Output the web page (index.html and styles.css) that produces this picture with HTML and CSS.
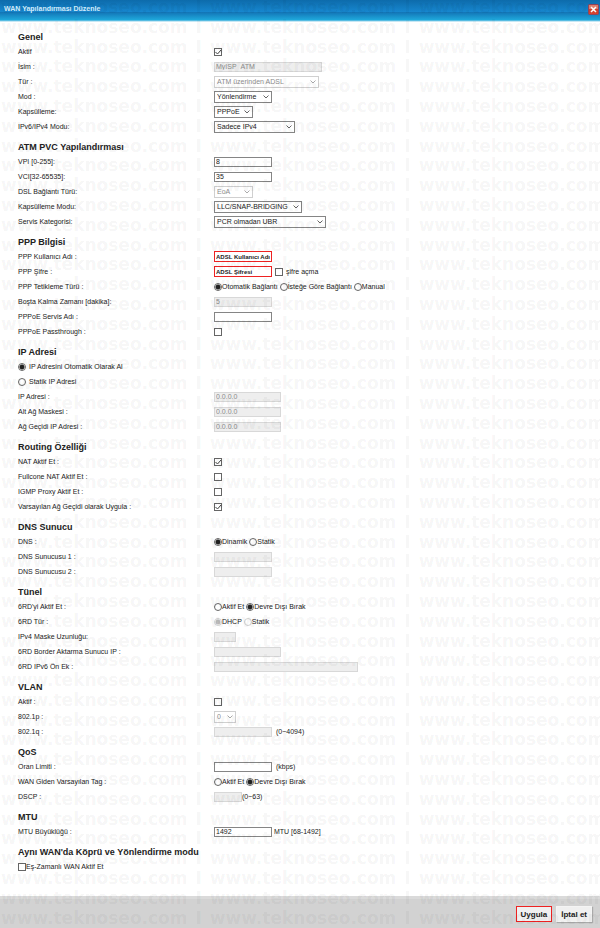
FILE: index.html
```html
<!DOCTYPE html>
<html lang="tr">
<head>
    <meta charset="UTF-8">
    <meta name="viewport" content="width=device-width, initial-scale=1.0">
    <title>WAN Yapılandırması Düzenle</title>
    <link rel="stylesheet" href="styles.css">
</head>

<body>
    <form class="container">
        <header>
            <h1>WAN Yapılandırması Düzenle</h1>
            <button type="button" class="close" aria-label="Kapat">
                <svg viewBox="0 0 11 11" width="11" height="11">
                    <rect x="0.5" y="0.5" width="10" height="10" rx="1" fill="#d8432f" stroke="#93455a"/>
                    <rect x="1" y="1" width="9" height="4" fill="#e4806f"/>
                    <path d="M3 3L8 8M8 3L3 8" stroke="#ffffff" stroke-width="1.5"/>
                </svg>
            </button>
        </header>

        <main>
            <section>
                <h2>Genel</h2>
                <div class="row">
                    <label for="active">Aktif</label>
                    <div class="field"><input type="checkbox" id="active" checked></div>
                </div>
                <div class="row">
                    <label for="name">İsim :</label>
                    <div class="field"><input type="text" id="name" class="w-name" value="MyISP_ATM" disabled></div>
                </div>
                <div class="row">
                    <label for="type">Tür :</label>
                    <div class="field"><select id="type" class="w-type" disabled><option>ATM üzerinden ADSL</option></select></div>
                </div>
                <div class="row">
                    <label for="mode">Mod :</label>
                    <div class="field"><select id="mode"><option>Yönlendirme</option></select></div>
                </div>
                <div class="row">
                    <label for="encap">Kapsülleme:</label>
                    <div class="field"><select id="encap" class="w-short"><option>PPPoE</option></select></div>
                </div>
                <div class="row">
                    <label for="ipmode">IPv6/IPv4 Modu:</label>
                    <div class="field"><select id="ipmode" class="w-ipmode"><option>Sadece IPv4</option></select></div>
                </div>
            </section>

            <section>
                <h2>ATM PVC Yapılandırması</h2>
                <div class="row">
                    <label for="vpi">VPI [0-255]:</label>
                    <div class="field"><input type="text" id="vpi" value="8"></div>
                </div>
                <div class="row">
                    <label for="vci">VCI[32-65535]:</label>
                    <div class="field"><input type="text" id="vci" value="35"></div>
                </div>
                <div class="row">
                    <label for="link">DSL Bağlantı Türü:</label>
                    <div class="field"><select id="link" class="w-short" disabled><option>EoA</option></select></div>
                </div>
                <div class="row">
                    <label for="encapmode">Kapsülleme Modu:</label>
                    <div class="field"><select id="encapmode" class="w-encap"><option>LLC/SNAP-BRIDGING</option></select></div>
                </div>
                <div class="row">
                    <label for="service">Servis Kategorisi:</label>
                    <div class="field"><select id="service" class="w-service"><option>PCR olmadan UBR</option></select></div>
                </div>
            </section>

            <section>
                <h2>PPP Bilgisi</h2>
                <div class="row">
                    <label for="user">PPP Kullanıcı Adı :</label>
                    <div class="field"><input type="text" id="user" class="marked" value="ADSL Kullanıcı Adı"></div>
                </div>
                <div class="row">
                    <label for="pass">PPP Şifre :</label>
                    <div class="field">
                        <input type="text" id="pass" class="marked" value="ADSL Şifresi">
                        <label class="choice spaced"><input type="checkbox">şifre açma</label>
                    </div>
                </div>
                <div class="row">
                    <span>PPP Tetikleme Türü :</span>
                    <div class="field">
                        <label class="choice"><input type="radio" name="trigger" checked>Otomatik Bağlantı</label>
                        <label class="choice"><input type="radio" name="trigger">İsteğe Göre Bağlantı</label>
                        <label class="choice"><input type="radio" name="trigger">Manual</label>
                    </div>
                </div>
                <div class="row">
                    <label for="idle">Boşta Kalma Zamanı [dakika]:</label>
                    <div class="field"><input type="text" id="idle" value="5" disabled></div>
                </div>
                <div class="row">
                    <label for="pppoe">PPPoE Servis Adı :</label>
                    <div class="field"><input type="text" id="pppoe"></div>
                </div>
                <div class="row">
                    <label for="passthrough">PPPoE Passthrough :</label>
                    <div class="field"><input type="checkbox" id="passthrough"></div>
                </div>
            </section>

            <section>
                <h2>IP Adresi</h2>
                <div class="row">
                    <label class="choice wide"><input type="radio" name="ip" checked>IP Adresini Otomatik Olarak Al</label>
                </div>
                <div class="row">
                    <label class="choice wide"><input type="radio" name="ip">Statik IP Adresi</label>
                </div>
                <div class="row">
                    <label for="ipaddr">IP Adresi :</label>
                    <div class="field"><input type="text" id="ipaddr" class="w-ip" value="0.0.0.0" disabled></div>
                </div>
                <div class="row">
                    <label for="mask">Alt Ağ Maskesi :</label>
                    <div class="field"><input type="text" id="mask" class="w-ip" value="0.0.0.0" disabled></div>
                </div>
                <div class="row">
                    <label for="gateway">Ağ Geçidi IP Adresi :</label>
                    <div class="field"><input type="text" id="gateway" class="w-ip" value="0.0.0.0" disabled></div>
                </div>
            </section>

            <section>
                <h2>Routing Özelliği</h2>
                <div class="row">
                    <label for="nat">NAT Aktif Et :</label>
                    <div class="field"><input type="checkbox" id="nat" checked></div>
                </div>
                <div class="row">
                    <label for="fullcone">Fullcone NAT Aktif Et :</label>
                    <div class="field"><input type="checkbox" id="fullcone"></div>
                </div>
                <div class="row">
                    <label for="igmp">IGMP Proxy Aktif Et :</label>
                    <div class="field"><input type="checkbox" id="igmp"></div>
                </div>
                <div class="row">
                    <label for="defgw">Varsayılan Ağ Geçidi olarak Uygula :</label>
                    <div class="field"><input type="checkbox" id="defgw" checked></div>
                </div>
            </section>

            <section>
                <h2>DNS Sunucu</h2>
                <div class="row">
                    <span>DNS :</span>
                    <div class="field">
                        <label class="choice"><input type="radio" name="dns" checked>Dinamik</label>
                        <label class="choice"><input type="radio" name="dns">Statik</label>
                    </div>
                </div>
                <div class="row">
                    <label for="dns1">DNS Sunucusu 1 :</label>
                    <div class="field"><input type="text" id="dns1" disabled></div>
                </div>
                <div class="row">
                    <label for="dns2">DNS Sunucusu 2 :</label>
                    <div class="field"><input type="text" id="dns2" disabled></div>
                </div>
            </section>

            <section>
                <h2>Tünel</h2>
                <div class="row">
                    <span>6RD'yi Aktif Et :</span>
                    <div class="field">
                        <label class="choice"><input type="radio" name="sixrd">Aktif Et</label>
                        <label class="choice"><input type="radio" name="sixrd" checked>Devre Dışı Bırak</label>
                    </div>
                </div>
                <div class="row">
                    <span>6RD Tür :</span>
                    <div class="field">
                        <label class="choice"><input type="radio" name="sixrdtype" checked disabled>DHCP</label>
                        <label class="choice"><input type="radio" name="sixrdtype" disabled>Statik</label>
                    </div>
                </div>
                <div class="row">
                    <label for="masklen">IPv4 Maske Uzunluğu:</label>
                    <div class="field"><input type="text" id="masklen" class="w-tiny" disabled></div>
                </div>
                <div class="row">
                    <label for="border">6RD Border Aktarma Sunucu IP :</label>
                    <div class="field"><input type="text" id="border" class="w-ip" disabled></div>
                </div>
                <div class="row">
                    <label for="prefix">6RD IPv6 Ön Ek :</label>
                    <div class="field"><input type="text" id="prefix" class="w-prefix" disabled></div>
                </div>
            </section>

            <section>
                <h2>VLAN</h2>
                <div class="row">
                    <label for="vlan">Aktif :</label>
                    <div class="field"><input type="checkbox" id="vlan"></div>
                </div>
                <div class="row">
                    <label for="p8021">802.1p :</label>
                    <div class="field"><select id="p8021" class="w-tiny" disabled><option>0</option></select></div>
                </div>
                <div class="row">
                    <label for="q8021">802.1q :</label>
                    <div class="field"><input type="text" id="q8021" disabled><span class="unit">(0~4094)</span></div>
                </div>
            </section>

            <section>
                <h2>QoS</h2>
                <div class="row">
                    <label for="rate">Oran Limiti :</label>
                    <div class="field"><input type="text" id="rate"><span class="unit">(kbps)</span></div>
                </div>
                <div class="row">
                    <span>WAN Giden Varsayılan Tag :</span>
                    <div class="field">
                        <label class="choice"><input type="radio" name="tag">Aktif Et</label>
                        <label class="choice"><input type="radio" name="tag" checked>Devre Dışı Bırak</label>
                    </div>
                </div>
                <div class="row">
                    <label for="dscp">DSCP :</label>
                    <div class="field"><input type="text" id="dscp" class="w-dscp" disabled><span>(0~63)</span></div>
                </div>
            </section>

            <section>
                <h2>MTU</h2>
                <div class="row">
                    <label for="mtu">MTU Büyüklüğü :</label>
                    <div class="field"><input type="text" id="mtu" value="1492"><span class="near">MTU [68-1492]</span></div>
                </div>
            </section>

            <section>
                <h2>Aynı WAN'da Köprü ve Yönlendirme modu</h2>
                <div class="row">
                    <label class="choice"><input type="checkbox">Eş-Zamanlı WAN Aktif Et</label>
                </div>
            </section>
        </main>

        <footer>
            <button type="submit" class="btn marked">Uygula</button>
            <button type="button" class="btn">İptal et</button>
        </footer>

        <div class="watermark" id="watermark" aria-hidden="true"></div>
    </form>

    <script>
        const watermark = document.getElementById('watermark');
        const line = '<span>www.teknoseo.com</span><span>I</span><span>www.teknoseo.com</span><span>I</span><span>www.teknoseo.com</span>';

        for (let i = 0; i < 47; i++) {
            const p = document.createElement('p');
            p.innerHTML = line;
            watermark.appendChild(p);
        }
    </script>
</body>
</html>
```

FILE: styles.css
```css
* {
    box-sizing: border-box;
}

body {
    margin: 0;
    background-color: #ffffff;
    color: #222222;
    font: 7px/15px "Liberation Sans", Arial, sans-serif;
}

.container {
    display: flex;
    flex-direction: column;
    position: relative;
    min-height: 100vh;
    overflow: hidden;
}

header {
    display: flex;
    justify-content: space-between;
    height: 22px;
    padding: 3px 1px 0 4px;
    background: linear-gradient(#0d6bab 0, #1787cf 12px, #1273b5 12px, #1fa9dc 20px, #8fcfe8 21px, #ffffff 22px);
}

h1 {
    margin: 0;
    color: #d5efff;
    font-size: 7px;
    line-height: 12px;
}

main {
    flex: 1;
    padding: 8px 18px;
}

section {
    margin-bottom: 6px;
}

h2 {
    margin: 0;
    font-size: 9px;
    line-height: 14px;
}

.row {
    display: grid;
    grid-template-columns: 196px 1fr;
    align-items: center;
    height: 15px;
    white-space: nowrap;
}

.field,
.choice {
    display: flex;
    align-items: center;
}

.choice {
    margin-right: 2px;
}

.wide {
    gap: 3px;
}

.spaced {
    gap: 3px;
    margin-left: 3px;
}

.unit {
    margin-left: 4px;
}

.near {
    margin-left: 2px;
}

input,
select,
button {
    margin: 0;
    border-radius: 0;
    color: #222222;
    font: 7px/9px "Liberation Sans", Arial, sans-serif;
}

input[type="text"],
select {
    width: 58px;
    border: 1px solid #858585;
    background-color: #ffffff;
}

input[type="text"] {
    height: 10px;
    padding: 0 1px;
}

input[type="text"]:disabled {
    border-color: #d8d8d8;
    background-color: #eeeeee;
    color: #8c8c8c;
}

input[type="text"].marked {
    height: 11px;
    border-color: #ee2222;
    font-size: 6px;
    font-weight: bold;
}

select {
    height: 12px;
    padding: 0 2px;
    appearance: none;
    background: #ffffff url("data:image/svg+xml,%3Csvg xmlns='http://www.w3.org/2000/svg' width='6' height='4'%3E%3Cpath d='M0.5 0.5l2.5 2.5 2.5-2.5' fill='none' stroke='%23666'/%3E%3C/svg%3E") no-repeat right 2px center;
}

select:disabled {
    border-color: #d0d0d0;
    background-image: url("data:image/svg+xml,%3Csvg xmlns='http://www.w3.org/2000/svg' width='6' height='4'%3E%3Cpath d='M0.5 0.5l2.5 2.5 2.5-2.5' fill='none' stroke='%23aaa'/%3E%3C/svg%3E");
    color: #8c8c8c;
    opacity: 1;
}

input[type="checkbox"],
input[type="radio"] {
    width: 8px;
    height: 8px;
    border: 1px solid #666666;
    appearance: none;
    background-color: #ffffff;
}

input[type="checkbox"]:checked {
    background-image: url("data:image/svg+xml,%3Csvg xmlns='http://www.w3.org/2000/svg' width='6' height='6'%3E%3Cpath d='M0.5 3l2 2 3.5-4' fill='none' stroke='%23444'/%3E%3C/svg%3E");
}

input[type="radio"] {
    border-radius: 50%;
}

input[type="radio"]:checked {
    background-image: radial-gradient(circle, #222222 2px, transparent 3px);
}

input[type="radio"]:disabled {
    opacity: 0.3;
}

.field .w-name { width: 108px; }
.field .w-type { width: 105px; }
.field .w-short { width: 39px; }
.field .w-ipmode { width: 81px; }
.field .w-encap { width: 88px; }
.field .w-service { width: 112px; }
.field .w-prefix { width: 144px; }
.field .w-ip { width: 67px; }
.field .w-dscp { width: 28px; }
.field .w-tiny { width: 22px; }

.close {
    display: flex;
    width: 11px;
    height: 11px;
    margin-top: 1px;
    padding: 0;
    border: 0;
    background: none;
}

footer {
    display: flex;
    justify-content: flex-end;
    gap: 4px;
    height: 32px;
    padding: 7px 8px 6px;
    border-top: 3px solid #dadada;
    background-color: #d2d2d2;
}

.btn {
    height: 16px;
    padding: 0 4px;
    border: 1px solid #f4f4f4;
    background-color: #f0f0f0;
    box-shadow: 1px 1px 1px #aaaaaa;
    font-size: 8px;
    font-weight: bold;
}

.btn.marked {
    border-color: #ee2222;
    box-shadow: none;
}

.watermark {
    display: flex;
    flex-direction: column;
    justify-content: space-between;
    position: absolute;
    inset: 0;
    padding-bottom: 3px;
    color: rgba(0, 0, 0, 0.05);
    font: bold 17px/14px "DejaVu Sans", Verdana, sans-serif;
    white-space: nowrap;
    pointer-events: none;
}

.watermark p {
    display: flex;
    gap: 8px;
    margin: 0;
    padding-left: 1px;
}
```
